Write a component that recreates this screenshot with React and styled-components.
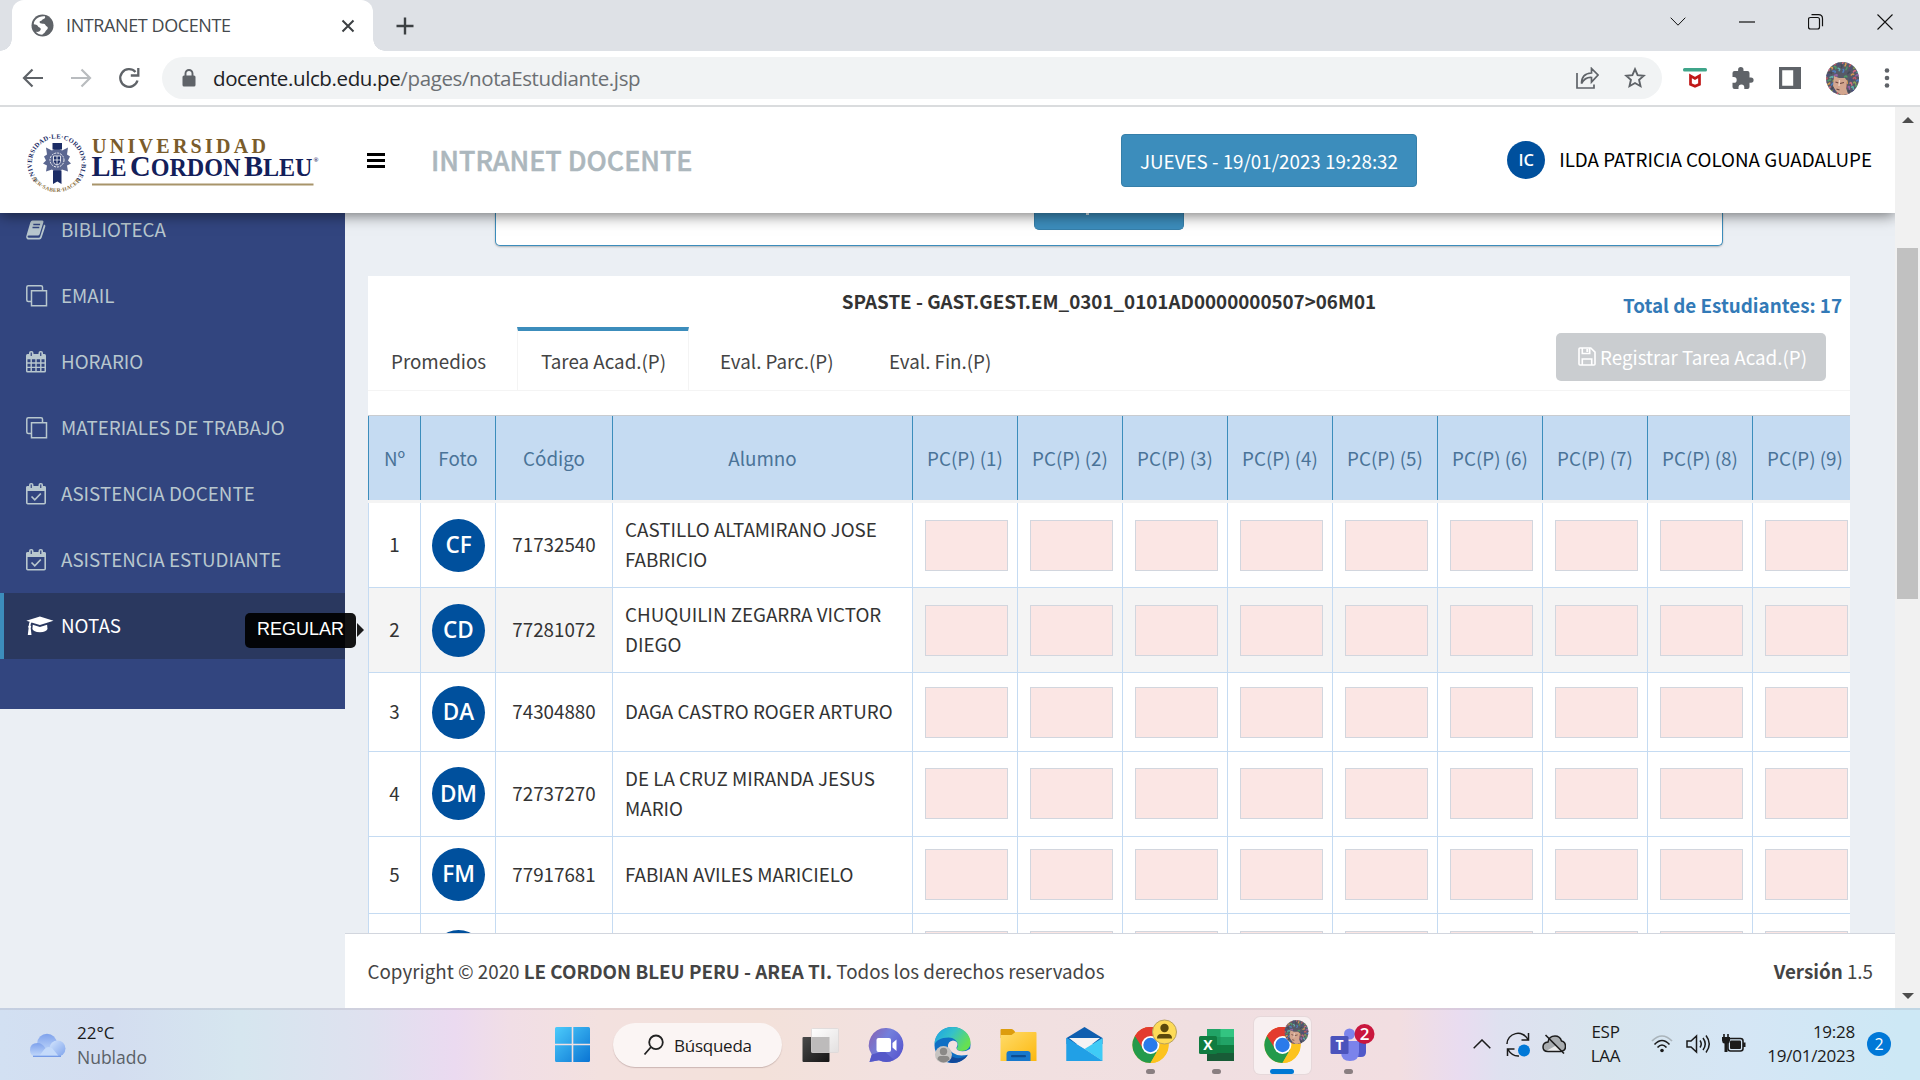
import React from "react";
import styled, { createGlobalStyle, css } from "styled-components";

const Global = createGlobalStyle`
  * { box-sizing: border-box; }
  html, body { margin: 0; padding: 0; overflow: hidden; }
  svg { display: block; flex: none; }
`;

const SITE_FONT = `"Noto Sans CJK JP", "Open Sans", sans-serif`;
const UI_FONT = `"Open Sans", "Noto Sans", sans-serif`;

/* ---------- browser window ---------- */

const Screen = styled.div`
  width: 1920px;
  height: 1080px;
  display: flex;
  flex-direction: column;
  overflow: hidden;
  background: #fff;
  font-family: ${UI_FONT};
  white-space: nowrap;
`;

const TabStrip = styled.div`
  height: 51px;
  flex: none;
  display: flex;
  align-items: center;
  background: #dee1e6;
  padding-left: 12px;
`;

const BrowserTab = styled.div`
  position: relative;
  width: 361px;
  height: 51px;
  background: #fff;
  border-radius: 12px 12px 0 0;
  display: flex;
  align-items: center;
  padding: 0 18px 0 19px;
  &::before,
  &::after {
    content: "";
    position: absolute;
    bottom: 0;
    width: 12px;
    height: 12px;
  }
  &::before {
    left: -12px;
    background: radial-gradient(circle at 0 0, transparent 11.5px, #fff 12px);
  }
  &::after {
    right: -12px;
    background: radial-gradient(circle at 100% 0, transparent 11.5px, #fff 12px);
  }
`;

const TabTitle = styled.span`
  margin-left: 12px;
  padding-bottom: 1px;
  flex: 1;
  font-size: 18px;
  letter-spacing: -0.4px;
  color: #45494d;
`;

const NewTab = styled.div`
  margin-left: 22px;
  flex: 1;
`;

const WindowControls = styled.div`
  display: flex;
  align-items: center;
  height: 43px;
  margin-bottom: 8px;
  gap: 53px;
  padding-right: 27px;
`;

const Toolbar = styled.div`
  height: 54px;
  flex: none;
  display: flex;
  align-items: center;
  padding: 0 30px 0 22px;
`;

const NavButtons = styled.div`
  display: flex;
  align-items: center;
  gap: 26px;
  width: 140px;
`;

const Omnibox = styled.div`
  width: 1500px;
  height: 42px;
  flex: none;
  border-radius: 21px;
  background: #f1f3f4;
  display: flex;
  align-items: center;
  padding: 0 16px 0 20px;
`;

const Url = styled.span`
  margin-left: 17px;
  flex: 1;
  font-size: 20.5px;
  letter-spacing: -0.38px;
  color: #6b6f73;
  b {
    font-weight: 400;
    color: #202124;
  }
`;

const OmniActions = styled.div`
  display: flex;
  gap: 25px;
`;

const Extensions = styled.div`
  display: flex;
  align-items: center;
  flex: 1;
  padding-left: 21px;
  justify-content: space-between;
`;

const ToolbarLine = styled.div`
  height: 2px;
  flex: none;
  background: #dadcde;
`;

/* ---------- site ---------- */

const Page = styled.div`
  height: 901px;
  flex: none;
  display: flex;
  font-family: ${SITE_FONT};
  font-size: 18.8px;
  line-height: 30px;
  color: #333;
`;

const Site = styled.div`
  width: 1895px;
  display: flex;
  flex-direction: column;
  background: #ebeff4;
`;

const Header = styled.header`
  position: relative;
  z-index: 2;
  height: 106px;
  flex: none;
  display: flex;
  align-items: center;
  background: #fff;
  padding: 0 23px 0 24px;
  box-shadow: 0 2px 14px rgba(0, 0, 0, 0.55);
  clip-path: inset(0 0 -30px 0);
`;

const Burger = styled.div`
  display: flex;
  flex-direction: column;
  justify-content: space-between;
  width: 18px;
  height: 15px;
  margin-left: 43px;
  i {
    height: 3px;
    background: #000;
  }
`;

const SiteTitle = styled.h1`
  margin: 0 0 0 46px;
  font-size: 26.85px;
  font-weight: 500;
  color: #acb7bd;
  width: 690px;
  -webkit-text-stroke: 0.5px #acb7bd;
`;

const DateButton = styled.button`
  width: 296px;
  height: 53px;
  padding: 2px 0 0;
  border: 1px solid #367fa9;
  border-radius: 4px;
  background: #3c8dbc;
  color: #fff;
  font: inherit;
`;

const User = styled.div`
  margin-left: auto;
  display: flex;
  align-items: center;
  gap: 14px;
  color: #000;
`;

const UserName = styled.span`
  padding-bottom: 2px;
`;

const Avatar = styled.div`
  width: ${(p) => p.$size}px;
  height: ${(p) => p.$size}px;
  flex: none;
  border-radius: 50%;
  background: #00509d;
  color: #fff;
  font-family: ${UI_FONT};
  font-weight: 600;
  font-size: ${(p) => p.$font}px;
  display: flex;
  align-items: center;
  justify-content: center;
`;

const Body = styled.div`
  flex: 1;
  min-height: 0;
  display: flex;
  overflow: hidden;
`;

const Sidebar = styled.nav`
  width: 345px;
  height: 496px;
  flex: none;
  background: #32457f;
  overflow: visible;
`;

const Menu = styled.ul`
  list-style: none;
  margin: -16px 0 0;
  padding: 0;
`;

const MenuItem = styled.li`
  height: 66px;
  display: flex;
  align-items: center;
  padding: 0 0 2px ${(p) => (p.$active ? 22 : 26)}px;
  color: #b8c7ce;
  ${(p) =>
    p.$active &&
    css`
      border-left: 4px solid #3c8dbc;
      background: #2a385f;
      color: #fff;
    `}
`;

const MenuIcon = styled.span`
  width: 35px;
  flex: none;
  padding-top: 1px;
`;

const Tooltip = styled.div`
  position: relative;
  z-index: 3;
  margin-left: auto;
  margin-right: -11px;
  top: 5px;
  width: 111px;
  height: 35px;
  flex: none;
  border-radius: 5px;
  background: rgba(0, 0, 0, 0.92);
  color: #fff;
  font: 18px/33px "Liberation Sans", Arial, sans-serif;
  padding-left: 12px;
  &::after {
    content: "";
    position: absolute;
    left: 112px;
    top: 10px;
    border: 7px solid transparent;
    border-left-color: #1a1a1a;
    border-right: 0;
  }
`;

const Main = styled.main`
  flex: 1;
  min-width: 0;
  display: flex;
  flex-direction: column;
`;

const Content = styled.div`
  flex: 1;
  min-height: 0;
  overflow: hidden;
`;

const SearchBox = styled.section`
  width: 1228px;
  height: 33px;
  margin-left: 150px;
  background: #fff;
  border: 1px solid #3c8dbc;
  border-top: 0;
  border-radius: 0 0 5px 5px;
  box-shadow: 0 1px 2px rgba(0, 0, 0, 0.25);
`;

const QueryButton = styled.div`
  position: relative;
  width: 150px;
  height: 17px;
  margin-left: 538px;
  background: #3c8dbc;
  border: 1px solid #367fa9;
  border-top: 0;
  border-radius: 0 0 5px 5px;
  &::after {
    content: "";
    position: absolute;
    left: 51px;
    top: 0;
    width: 3px;
    height: 2px;
    background: #d6e6ef;
  }
`;

const Card = styled.section`
  width: 1482px;
  margin: 30px 0 0 23px;
  background: #fff;
  overflow: hidden;
`;

const CardHead = styled.div`
  height: 51px;
  display: grid;
  grid-template-columns: 1fr auto 1fr;
  font-weight: 700;
  padding: 10px 8px 0;
`;

const Total = styled.span`
  justify-self: end;
  padding-top: 4px;
  color: #337ab7;
`;

const Tabs = styled.div`
  height: 64px;
  display: flex;
  border-bottom: 1px solid #f4f4f4;
`;

const Tab = styled.div`
  width: ${(p) => p.$w}px;
  padding: 15px 0 0 ${(p) => p.$pad}px;
  color: #444;
  border-top: 4px solid ${(p) => (p.$active ? "#3c8dbc" : "transparent")};
  border-left: 1px solid ${(p) => (p.$active ? "#f4f4f4" : "transparent")};
  border-right: 1px solid ${(p) => (p.$active ? "#f4f4f4" : "transparent")};
`;

const SaveButton = styled.button`
  margin: 6px 24px 0 auto;
  width: 270px;
  height: 48px;
  border: 0;
  border-radius: 5px;
  background: #cacdd0;
  color: #fff;
  font: inherit;
  padding: 0 0 1px 3px;
  display: flex;
  align-items: center;
  justify-content: center;
  gap: 4px;
`;

const Table = styled.div`
  margin-top: 24px;
  width: 1489px;
`;

const columns = css`
  display: grid;
  grid-template-columns: 52px 75px 117px 300px repeat(9, 105px);
`;

const HeadRow = styled.div`
  ${columns}
  height: 88px;
  border-top: 1px solid #c9ccd0;
  border-bottom: 3px solid #f4f4f4;
  background: #c5dbf2;
  color: #4a7398;
`;

const HeadCell = styled.div`
  display: flex;
  align-items: center;
  justify-content: center;
  padding-bottom: 1px;
  border-left: 1px solid #3c8dbc;
`;

const Row = styled.div`
  ${columns}
  height: ${(p) => p.$h}px;
  border-bottom: 1px solid #c5dbf2;
  background: ${(p) => (p.$shade ? "#f4f4f4" : "#fff")};
`;

const Cell = styled.div`
  display: flex;
  align-items: center;
  justify-content: center;
  padding-bottom: ${(p) => p.$lift || 0}px;
  border-left: 1px solid #c5dbf2;
`;

const PhotoCell = styled(Cell)`
  padding-left: 1px;
`;

const NameCell = styled(Cell)`
  justify-content: flex-start;
  background: #fff;
  padding-left: 12px;
  white-space: pre-line;
`;

const Score = styled.div`
  width: 83px;
  height: 51px;
  margin-left: 3px;
  border: 1px solid #d2d6de;
  background: #fbe6e4;
`;

const Footer = styled.footer`
  height: 75px;
  flex: none;
  display: flex;
  justify-content: space-between;
  align-items: center;
  padding: 0 22px 0 22.5px;
  background: #fff;
  border-top: 1px solid #d2d6de;
  color: #444;
`;

const Scrollbar = styled.div`
  width: 25px;
  background: #f1f1f1;
  display: flex;
  flex-direction: column;
  align-items: center;
  padding: 10px 0 9px;
`;

const Thumb = styled.div`
  width: 21px;
  height: 351px;
  margin: 125px 0 auto;
  background: #c1c1c1;
`;

const Arrow = styled.div`
  border: 6px solid transparent;
  ${(p) =>
    p.$up
      ? "border-bottom-color:#4d4d4d;border-top:0;"
      : "border-top-color:#4d4d4d;border-bottom:0;"}
`;

/* ---------- taskbar ---------- */

const Taskbar = styled.div`
  height: 72px;
  flex: none;
  display: flex;
  align-items: center;
  color: #1b1b1b;
  background: linear-gradient(
    90deg,
    #d2e0f2 0px, #d3ddf0 110px, #d6e6ef 240px, #dfe1ef 370px, #ebdaf0 455px,
    #f1dee6 510px, #f3e1df 600px, #f3e1da 760px, #f2e1e0 900px, #f0dfe1 1200px,
    #f2dee1 1400px, #e9dcf0 1460px, #dfe1f0 1500px, #d8e5ee 1600px,
    #d5e6f5 1740px, #cde8f5 1900px
  );
  box-shadow: inset 0 2px 0 rgba(80, 60, 80, 0.1);
`;

const Weather = styled.div`
  display: flex;
  align-items: center;
  width: 555px;
  padding: 2px 0 0 29px;
  gap: 11px;
`;

const Lines = styled.div`
  display: flex;
  flex-direction: column;
  font-size: 17px;
  line-height: 24px;
  letter-spacing: ${(p) => p.$ls ?? -0.25}px;
  text-align: ${(p) => p.$align || "left"};
  width: ${(p) => (p.$w ? p.$w + "px" : "auto")};
  small {
    font-size: 17.5px;
    color: #5a6168;
  }
`;

const SearchPill = styled.div`
  width: 169px;
  height: 44px;
  margin: 2px 5px 0 23px;
  border-radius: 22px;
  background: #fbf5f4;
  box-shadow: 0 1px 1px rgba(90, 60, 60, 0.25);
  display: flex;
  align-items: center;
  gap: 9px;
  padding-left: 30px;
  font-size: 17px;
  letter-spacing: -0.25px;
`;

const AppSlot = styled.div`
  position: relative;
  width: 66px;
  height: 72px;
  flex: none;
  display: flex;
  flex-direction: column;
  align-items: center;
  padding-top: 9px;
`;

const AppTile = styled.div`
  width: 57px;
  height: 57px;
  padding: 4px 4px 0;
  border-radius: 6px;
  ${(p) =>
    p.$on &&
    css`
      background: #f8f0f1;
      box-shadow: 0 0 0 1px #e6d8da;
    `}
`;

const RunMark = styled.i`
  width: ${(p) => (p.$on ? 24 : 9)}px;
  height: 5px;
  margin-top: -5px;
  border-radius: 3px;
  background: ${(p) => (p.$on ? "#0078d4" : "#8a7f81")};
`;

const Tray = styled.div`
  display: flex;
  align-items: center;
  flex: 1;
  padding-left: 92px;
`;

const TrayGap = styled.span`
  width: ${(p) => p.$w}px;
  flex: none;
`;

const Notice = styled.div`
  width: 24px;
  height: 24px;
  margin-left: 12px;
  border-radius: 50%;
  background: #0078d7;
  color: #fff;
  font-size: 16px;
  line-height: 24px;
  text-align: center;
`;

/* ---------- drawings ---------- */

const Logo = () => (
  <svg width="300" height="80" viewBox="24 119.500 300 80" fontFamily='"Liberation Serif", serif'>
    <defs>
      <path id="ringTop" d="M37.5 179 A25 25 0 1 1 76 179" />
      <path id="ringBottom" d="M32.500 178 A29 29 0 0 0 81.500 178" />
    </defs>
    <text fontSize="6.500" fontWeight="700" fill="#1c2d66">
      <textPath href="#ringTop" textLength="114" lengthAdjust="spacing">UNIVERSIDAD·LE·CORDON·BLEU</textPath>
    </text>
    <text fontSize="5.500" fontWeight="700" fill="#8a713f">
      <textPath href="#ringBottom" textLength="56" lengthAdjust="spacing">SER·SABER·HACER</textPath>
    </text>
    <g fill="#1c2d66">
      <path d="M52.500 142.500h9.500v6.500h-9.500zM53 170h8.500v13.500l-4.200-2.500-4.300 2.500z" />
      <path d="M46 147l6 3 5-3 5 3 6-3-1 7 3 2-2 4 3 3-4 2 1 6-6-2-5 4-5-4-6 2 1-6-4-2 3-3-2-4 3-2z" opacity="0.72" />
    </g>
    <circle cx="57" cy="159.500" r="7" fill="none" stroke="#fff" strokeWidth="0.900" strokeDasharray="2 1" />
    <path d="M53.500 155.500h7v5.500q0 2.500-3.500 3.500-3.500-1-3.500-3.500zM57 155.500v9M53.500 159.500h7" fill="#1c2d66" stroke="#fff" strokeWidth="0.800" />
    <text x="92" y="152.200" fontSize="20" fontWeight="700" fill="#7a5c2b" textLength="174" lengthAdjust="spacing">UNIVERSIDAD</text>
    <g fill="#13205a" fontWeight="700">
      <text x="91.500" y="175.300" fontSize="29" textLength="221" lengthAdjust="spacingAndGlyphs">
        L<tspan fontSize="24.500">E</tspan><tspan fontSize="14"> </tspan>C<tspan fontSize="24.500">ORDON</tspan><tspan fontSize="14"> </tspan>B<tspan fontSize="24.500">LEU</tspan>
      </text>
      <text x="313.500" y="161.500" fontSize="6.500">®</text>
    </g>
    <path d="M92 184h221.500" stroke="#a8946a" strokeWidth="2" />
  </svg>
);

const Globe = () => (
  <svg width="23" height="23" viewBox="0 0 23 23">
    <circle cx="11.500" cy="11.500" r="11" fill="#5f6368" />
    <path d="M14 2.300c.5 1.800-.3 2.600-2 3-1.300.3-1 1.600-2.400 1.800-1.400.2-1.200 1.600-.2 2.200 2 .9 4-.4 5 1.600.8 1.700 2.500 1.300 2.400 3-.1 1.500-1.700 1.800-2.400 3.600-1 2.200-2.600 2-3.100 3.300-2.600 0-5-1.100-6.500-3 2.600.4 4.700-.6 5-2.500.2-1.700-2.400-1.500-3-3.200-.5-1.400-2.300-1.700-4-1.900C2.800 6 7.500 1.600 14 2.300z" fill="#fff" />
  </svg>
);

const Stroke = ({ w, h, d, c = "#5f6368", s = 2, fill = "none", ...rest }) => (
  <svg width={w} height={h} viewBox={`0 0 ${w} ${h}`} fill={fill} stroke={c} strokeWidth={s} {...rest}>
    <path d={d} />
  </svg>
);

const Portrait = ({ size }) => {
  const dabs = ["#4f9b68", "#c75c68", "#4f7fc0", "#d39a50", "#9563a6", "#454a58", "#cf6c80", "#5fb0ac", "#4a4f7c", "#8ba356"];
  return (
    <svg width={size} height={size} viewBox="0 0 33 33">
      <defs><clipPath id={`pc${size}`}><circle cx="16.500" cy="16.500" r="16.500" /></clipPath></defs>
      <g clipPath={`url(#pc${size})`}>
        <rect width="33" height="33" fill="#575a68" />
        {Array.from({ length: 75 }, (_, i) => {
          const a = i * 2.4;
          const r = 2 + Math.sqrt(i) * 1.95;
          const x = 16.5 + r * Math.cos(a);
          const y = 15 + r * Math.sin(a);
          return (
            <path key={i} d={`M${x} ${y}q1.500 -2 ${2.4 * Math.cos(a)} ${2.8 * Math.sin(a)}`} stroke={dabs[i % 10]} strokeWidth="1.500" fill="none" strokeLinecap="round" />
          );
        })}
        <path d="M8 14l5 2 6 0 2 3-1 7 2 6-7 1-5-4-3-5z" fill="#d3a68f" />
        <path d="M9.500 20l3 1M14 21.500l4-1M10.500 27l3 1" stroke="#6b4640" strokeWidth="1.100" />
        <path d="M13.500 18l-.5 6" stroke="#edd2c3" strokeWidth="1.300" />
      </g>
    </svg>
  );
};

const Book = () => (
  <svg width="21" height="20" viewBox="0 0 21 20">
    <path d="M6.500.5h9.800q1.600 0 1.100 1.700L13.700 14q-.5 1.500-2 1.500H2.800q-1.300 0-1.300 1 .1 1.300 1.700 1.300h9.600q1 0 1.400-1.200L18 4.600q1.800.4 1.300 2l-3.700 11.200q-.5 1.700-2.200 1.700H3Q0 19.500.2 16.400L4.300 2.500Q5 .5 6.500.5z" fill="#b8c7ce" />
    <path d="M7.300 4.500h6.800M6.500 7.500h6.800" stroke="#32457f" strokeWidth="1.300" />
  </svg>
);

const Clone = () => <Stroke w={22} h={22} c="#b8c7ce" s={1.5} d="M5.500 5.700h15v15h-15zM5.500 16.500H2.300q-1.500 0-1.500-1.500V2.300Q.8.800 2.300.8H15q1.500 0 1.500 1.500v3.200" />;

const Calendar = () => (
  <svg width="20" height="22" viewBox="0 0 20 22">
    <rect x="0" y="3" width="20" height="18.500" rx="1.500" fill="#b8c7ce" />
    <rect x="3" y="0" width="4.500" height="6.500" rx="2" fill="#b8c7ce" />
    <rect x="12.500" y="0" width="4.500" height="6.500" rx="2" fill="#b8c7ce" />
    <path d="M5.250 1.500v3.500M14.750 1.500v3.500" stroke="#32457f" strokeWidth="1.200" />
    <path
      d="M1.500 8.300h3v3h-3zM5.900 8.300h3.400v3H5.900zM10.700 8.300h3.400v3h-3.400zM15.500 8.300h3v3h-3zM1.500 12.700h3v3h-3zM5.900 12.700h3.400v3H5.900zM10.700 12.700h3.400v3h-3.400zM15.500 12.700h3v3h-3zM1.500 17.100h3v3h-3zM5.900 17.100h3.400v3H5.900zM10.700 17.100h3.400v3h-3.400zM15.500 17.100h3v3h-3z"
      fill="#32457f"
    />
  </svg>
);

const CalendarCheck = () => (
  <svg width="20" height="22" viewBox="0 0 20 22" fill="none" stroke="#b8c7ce">
    <path d="M0 4.500Q0 3 1.500 3h17Q20 3 20 4.500V8H0z" fill="#b8c7ce" stroke="none" />
    <rect x=".8" y="4" width="18.400" height="16.700" rx="1" strokeWidth="1.600" />
    <rect x="3" y="0" width="4.500" height="6.500" rx="2" fill="#b8c7ce" stroke="none" />
    <rect x="12.500" y="0" width="4.500" height="6.500" rx="2" fill="#b8c7ce" stroke="none" />
    <path d="M5.250 1.500v3.500M14.750 1.500v3.500" stroke="#32457f" strokeWidth="1.200" />
    <path d="M5.500 13.500l3.300 3.300 6-6.300" strokeWidth="1.700" />
  </svg>
);

const Cap = () => (
  <svg width="28" height="20" viewBox="0 0 28 20" fill="#fff">
    <path d="M13.900.5L27.500 4.800 13.900 9 5.500 6.500Q4.600 7.500 4.500 9.500q1.300.9.200 2.400l.8 7H1.800l.8-7q-1.200-1.500.2-2.500.1-2.200.9-3.700L.3 4.800z" />
    <path d="M6.800 8.800l7.100 2.300 7.200-2.300.4 4.200q-1 3-7.600 3.200-6.500-.2-7.500-3.200z" />
  </svg>
);

const Floppy = () => (
  <svg width="18" height="19" viewBox="0 0 18 19" fill="none" stroke="#fff" strokeWidth="1.600">
    <path d="M1 2q0-1 1-1h10.800L17 5.200V17q0 1-1 1H2q-1 0-1-1z" />
    <path d="M4.300 18v-6h9.400v6" />
    <path d="M4.300 1v5.500h7.400V1" />
    <path d="M9.300 2v3" strokeWidth="2" />
  </svg>
);

const CloudArt = () => (
  <svg width="37" height="25" viewBox="0 0 37 25">
    <defs>
      <linearGradient id="cl" x1="0" y1="0" x2="0" y2="1"><stop offset="0" stopColor="#7fa2ec" /><stop offset="1" stopColor="#c5dbfb" /></linearGradient>
      <linearGradient id="cl2" x1="0" y1="0" x2="1" y2="1"><stop offset="0" stopColor="#d5e6fd" /><stop offset="1" stopColor="#7ea3ec" /></linearGradient>
    </defs>
    <circle cx="18" cy="10.500" r="9.800" fill="url(#cl)" />
    <circle cx="28.500" cy="15.500" r="8" fill="url(#cl2)" />
    <path d="M8.500 10q5 0 8 5.500l4-1 8 9.500h-20Q1 24 1 17t7.500-7z" fill="url(#cl)" />
    <path d="M14 18q4-6 9-3l7 8.500H10z" fill="#c4dafa" />
    <path d="M4 23.300h28" stroke="#6d95e6" strokeWidth="1.200" />
  </svg>
);

const StartArt = () => (
  <svg width="35" height="35" viewBox="0 0 35 35">
    <defs><linearGradient id="st" x1="0" y1="0" x2="1" y2="1" gradientUnits="objectBoundingBox"><stop offset="0" stopColor="#4ccbfb" /><stop offset="1" stopColor="#0a74d3" /></linearGradient></defs>
    <path d="M1.500 0H16.700v16.700H0V1.500Q0 0 1.500 0zM18.300 0h15.200q1.500 0 1.500 1.500v15.200H18.300zM0 18.300h16.700V35H1.500Q0 35 0 33.500zM18.300 18.300H35v15.200q0 1.500-1.500 1.500H18.300z" fill="url(#st)" />
  </svg>
);

/* App icons share one square box, centred on the icon's centre. */
const Art = ({ children }) => <svg width="49" height="49" viewBox="0 0 49 49" overflow="visible">{children}</svg>;

const TaskView = () => (
  <Art>
    <defs>
      <linearGradient id="tv" x1="0" y1="0" x2="1" y2="1"><stop offset="0" stopColor="#4a4a4a" /><stop offset="1" stopColor="#151515" /></linearGradient>
      <linearGradient id="tv2" x1="0" y1="0" x2="1" y2="1"><stop offset="0" stopColor="#fff" /><stop offset="1" stopColor="#e3e0e0" /></linearGradient>
    </defs>
    <rect x="6.500" y="16" width="27" height="25" rx="1" fill="url(#tv)" />
    <rect x="15.500" y="7.500" width="27" height="24" rx="1" fill="url(#tv2)" stroke="#dcd8d8" strokeWidth=".8" />
    <path d="M15.500 16h18v15.500h-18z" fill="#bdbbbb" />
  </Art>
);

const Chat = () => (
  <Art>
    <defs><linearGradient id="ch" x1="0" y1="0" x2="1" y2="0.6"><stop offset="0" stopColor="#8a5fae" /><stop offset=".5" stopColor="#7380dc" /><stop offset="1" stopColor="#5b5bd0" /></linearGradient></defs>
    <path d="M24.500 7a17 17 0 1 1-7.500 32.300L7.500 41l2.300-7.500A17 17 0 0 1 24.500 7z" fill="url(#ch)" />
    <path d="M9.800 33.500L7.500 41l9.500-1.700q8 3.700 15-.5L22 30z" fill="#5558c8" />
    <rect x="14.500" y="17" width="14.500" height="14" rx="2" fill="#fff" />
    <path d="M30.500 22l4-3.500v11.500l-4-3.500z" fill="#fff" />
  </Art>
);

const Edge = () => (
  <Art>
    <defs>
      <linearGradient id="eg" x1="0" y1="0" x2="1" y2=".5"><stop offset="0" stopColor="#1a9fe6" /><stop offset=".5" stopColor="#35c1c9" /><stop offset="1" stopColor="#66e052" /></linearGradient>
    </defs>
    <circle cx="24.500" cy="24" r="18" fill="#0f6fc4" />
    <path d="M6.500 24C6.500 13 14 6 24.500 6 35 6 42.500 13.500 42.500 21.500c0 5.500-4 8.500-8.500 8.500-4 0-5.500-1.500-5-3 .8-1.500 1-2.500.7-4-.7-3.500-4-6.500-9-6.500C13 16.500 7 20 6.500 24z" fill="url(#eg)" />
    <path d="M19 25c-1 8 6 13 13 12 4-.5 6.500-2 8-3.500C37 39 31 42 24.500 42 16 41 11 30 19 25z" fill="#11499a" />
    <path d="M20 26.500Q19.500 20 25 19.500q4.500.5 4.500 4-.1 1.500-1 3-.5 3.500 6 3.700 4.500 0 8.500-2.700v5q-3 2-7 1.800Q25 35.500 20 26.500z" fill="#f2e1e0" />
    <circle cx="15.500" cy="33.500" r="8.500" fill="#c6c3c1" />
    <circle cx="15.500" cy="30.500" r="3.700" fill="#8b8987" />
    <path d="M9.500 38.500q0-3.500 3-3.500h6q3 0 3 3.500-6 6-12 0z" fill="#8b8987" />
  </Art>
);

const Folder = () => (
  <Art>
    <defs><linearGradient id="fo" x1="0" y1="0" x2="1" y2="1"><stop offset="0" stopColor="#ffdc6b" /><stop offset="1" stopColor="#fcb80e" /></linearGradient></defs>
    <path d="M6.500 9q0-1 1-1h10q1.500 0 2.500 1.500L22 12v5H6.500z" fill="#dd9d0d" />
    <path d="M6.500 14h11l4-3H41.500q1 0 1 1v28H6.500z" fill="url(#fo)" />
    <path d="M12.500 40v-7q0-3 3-3h18q3 0 3 3v7z" fill="#1778cc" />
    <rect x="17" y="34" width="15" height="2.200" rx="1" fill="#0b4d92" />
  </Art>
);

const Mail = () => (
  <Art>
    <path d="M6.500 17L24.500 6l18 11v6h-36z" fill="#0f5eaf" />
    <path d="M9 17h31L24.500 29z" fill="#f4f3f4" />
    <path d="M6.500 17v23h36z" fill="#28a6e8" />
    <path d="M42.500 17v23L24.500 28z" fill="#3fcbf6" />
    <path d="M6.500 17l18 11 18 12h-36z" fill="#21a0e6" />
  </Art>
);

const Chrome = ({ children }) => (
  <Art>
    <g transform="translate(24.500 24)">
      <circle r="18" fill="#fcc31e" />
      <path d="M0 0L-15.600-9A18 18 0 0 1 15.600-9H0z" fill="#e33b2e" />
      <path d="M-15.600-9A18 18 0 0 0 0 18L7.800 4.500 0 0z" fill="#239a4b" />
      <path d="M-15.600-9L-7 4.500 0-9H15.600A18 18 0 0 0-15.600-9z" fill="#e33b2e" />
      <path d="M7.800 4.500L0 18A18 18 0 0 0 15.600-9H0z" fill="#fcc31e" />
      <circle r="8.900" fill="#fff" />
      <circle r="7.200" fill="#2a7bea" />
    </g>
    {children}
  </Art>
);

const YellowUser = () => (
  <g>
    <circle cx="38.500" cy="11" r="12" fill="#fddb58" stroke="#b9a25e" strokeWidth="1" />
    <circle cx="38.500" cy="7" r="4.200" fill="#5b4a0c" />
    <path d="M31 17.500q0-4.500 4-4.500h7q4 0 4 4.500z" fill="#5b4a0c" />
  </g>
);

const Excel = () => (
  <Art>
    <path d="M15 8h27v32H15z" fill="#21a366" />
    <path d="M28.500 8H42v8H28.500z" fill="#33c481" />
    <path d="M15 24h13.500v8H15zM28.500 24H42v8H28.500z" fill="#107c41" />
    <path d="M15 24h13.500v-8H15z" fill="#1a9157" opacity=".6" />
    <path d="M15 32h27v8H15z" fill="#185c37" />
    <rect x="7" y="15" width="18" height="18" rx="1.500" fill="#107c41" />
    <text x="16" y="29" fontSize="14" fontWeight="700" fill="#fff" textAnchor="middle">X</text>
  </Art>
);

const Teams = () => (
  <Art>
    <circle cx="25.500" cy="13" r="5.500" fill="#7b83eb" />
    <circle cx="37" cy="15" r="4" fill="#5059c9" />
    <path d="M30 20h12v11q0 5-5 5h-5z" fill="#5059c9" />
    <path d="M17 20h18v11q0 9-9 9t-9-9z" fill="#7b83eb" />
    <rect x="6.500" y="15" width="18" height="18" rx="1.500" fill="#4b53bc" />
    <text x="15.500" y="29" fontSize="14" fontWeight="700" fill="#fff" textAnchor="middle">T</text>
    <circle cx="40.500" cy="13" r="10" fill="#c9173e" />
    <text x="40.500" y="19" fontSize="17" fontWeight="600" fill="#fff" textAnchor="middle">2</text>
  </Art>
);

/* ---------- data ---------- */

const menu = [
  ["BIBLIOTECA", Book],
  ["EMAIL", Clone],
  ["HORARIO", Calendar],
  ["MATERIALES DE TRABAJO", Clone],
  ["ASISTENCIA DOCENTE", CalendarCheck],
  ["ASISTENCIA ESTUDIANTE", CalendarCheck],
  ["NOTAS", Cap],
];

const students = [
  { n: 1, ini: "CF", code: "71732540", name: "CASTILLO ALTAMIRANO JOSE\nFABRICIO", h: 85 },
  { n: 2, ini: "CD", code: "77281072", name: "CHUQUILIN ZEGARRA VICTOR\nDIEGO", h: 85, shade: true },
  { n: 3, ini: "DA", code: "74304880", name: "DAGA CASTRO ROGER ARTURO", h: 79 },
  { n: 4, ini: "DM", code: "72737270", name: "DE LA CRUZ MIRANDA JESUS\nMARIO", h: 85, lift: 1 },
  { n: 5, ini: "FM", code: "77917681", name: "FABIAN AVILES MARICIELO", h: 77, lift: 2 },
  { n: "", ini: "", code: "", name: "", h: 85 },
];

const scores = [1, 2, 3, 4, 5, 6, 7, 8, 9];

const apps = [
  { art: <TaskView /> },
  { art: <Chat /> },
  { art: <Edge /> },
  { art: <Folder /> },
  { art: <Mail /> },
  { art: <Chrome><YellowUser /></Chrome>, run: true },
  { art: <Excel />, run: true },
  { art: <Chrome><g transform="translate(26.500 -1)"><Portrait size={24} /></g></Chrome>, run: true, on: true },
  { art: <Teams />, run: true },
];

export default function App() {
  return (
    <Screen>
      <Global />
      <TabStrip>
        <BrowserTab>
          <Globe />
          <TabTitle>INTRANET DOCENTE</TabTitle>
          <Stroke w={14} h={14} d="M1.500 1.500l11 11M12.500 1.500l-11 11" c="#3c4043" />
        </BrowserTab>
        <NewTab><Stroke w={20} h={20} d="M10 1.500v17M1.500 10h17" c="#3c4043" s={2.4} /></NewTab>
        <WindowControls>
          <Stroke w={16} h={10} d="M.7 .7l7.300 7.500 7.300-7.500" c="#111" s={1} />
          <Stroke w={16} h={2} d="M0 1h16" c="#111" s={1.2} />
          <Stroke w={16} h={16} d="M2.500 3.500h7q2 0 2 2v7.500q0 2-2 2h-7q-2 0-2-2V5.500q0-2 2-2zM3.500.7h7q4 0 4 4v7.500" c="#111" s={1.2} />
          <Stroke w={16} h={16} d="M.5.5l15 15M15.500.5l-15 15" c="#111" s={1.1} />
        </WindowControls>
      </TabStrip>
      <Toolbar>
        <NavButtons>
          <Stroke w={22} h={20} d="M21 10H2.500M10.500 1.500L2 10l8.500 8.500" s={2.2} />
          <Stroke w={22} h={20} d="M1 10h18.500M11.500 1.500L20 10l-8.500 8.500" s={2.2} c="#b9bcbf" />
          <Stroke w={22} h={22} d="M17.500 5a8.800 8.800 0 1 0 2 8.500M20.300 1v7.500h-7.500" s={2.3} />
        </NavButtons>
        <Omnibox>
          <svg width="14" height="18" viewBox="0 0 14 18">
            <rect x=".5" y="6.500" width="13" height="11" rx="1.500" fill="#5f6368" />
            <path d="M3.500 7V4.500a3.500 3.500 0 0 1 7 0V7" fill="none" stroke="#5f6368" strokeWidth="1.900" />
          </svg>
          <Url><b>docente.ulcb.edu.pe</b>/pages/notaEstudiante.jsp</Url>
          <OmniActions>
            <Stroke w={23} h={22} s={1.7} d="M1 6v15h17v-3.500M5.500 16.500Q5.500 6.500 15.500 6V1.500L22 8l-6.500 7v-4.500Q9 10 5.500 16.500z" />
            <Stroke w={22} h={22} s={1.9} d="M11 2.200l2.600 5.900 6.300.6-4.800 4.200 1.400 6.300L11 16l-5.500 3.200 1.400-6.300L2.100 8.700l6.300-.6z" />
          </OmniActions>
        </Omnibox>
        <Extensions>
          <svg width="24" height="20" viewBox="0 0 24 20">
            <rect width="24" height="3.500" rx="1.500" fill="#3fa58a" />
            <path d="M7.500 7.800l4.500 2.700 4.500-2.700v8.500L12 18.200l-4.500-1.900z" fill="none" stroke="#c01818" strokeWidth="2.700" />
          </svg>
          <svg width="22" height="22" viewBox="0 0 22 22">
            <path d="M19 10.500h-1.500V6q0-2-2-2H11.500V2.700a2.700 2.700 0 0 0-5.400 0V4H2.500Q.5 4 .5 6v4h1.300a2.900 2.900 0 0 1 0 5.800H.5V20q0 2 2 2h4v-1.500a2.900 2.900 0 0 1 5.800 0V22h3.200q2 0 2-2v-4.300H19a2.600 2.600 0 0 0 0-5.200z" fill="#5f6368" />
          </svg>
          <svg width="22" height="22" viewBox="0 0 22 22">
            <path d="M0 0h22v22H0zM3.200 3.200v15.600h11V3.200z" fill="#5f6368" fillRule="evenodd" />
          </svg>
          <Portrait size={33} />
          <svg width="6" height="20" viewBox="0 0 6 20" fill="#5f6368">
            <circle cx="3" cy="2.500" r="2.300" /><circle cx="3" cy="10" r="2.300" /><circle cx="3" cy="17.500" r="2.300" />
          </svg>
        </Extensions>
      </Toolbar>
      <ToolbarLine />
      <Page>
        <Site>
          <Header>
            <Logo />
            <Burger><i /><i /><i /></Burger>
            <SiteTitle>INTRANET DOCENTE</SiteTitle>
            <DateButton>JUEVES - 19/01/2023 19:28:32</DateButton>
            <User>
              <Avatar $size={38} $font={16.5}>IC</Avatar>
              <UserName>ILDA PATRICIA COLONA GUADALUPE</UserName>
            </User>
          </Header>
          <Body>
            <Sidebar>
              <Menu>
                {menu.map(([label, Icon]) => (
                  <MenuItem key={label} $active={label === "NOTAS"}>
                    <MenuIcon><Icon /></MenuIcon>
                    {label}
                    {label === "NOTAS" && <Tooltip>REGULAR</Tooltip>}
                  </MenuItem>
                ))}
              </Menu>
            </Sidebar>
            <Main>
              <Content>
                <SearchBox><QueryButton /></SearchBox>
                <Card>
                  <CardHead>
                    <span />
                    <span>SPASTE - GAST.GEST.EM_0301_0101AD0000000507&gt;06M01</span>
                    <Total>Total de Estudiantes: 17</Total>
                  </CardHead>
                  <Tabs>
                    <Tab $w={149} $pad={22}>Promedios</Tab>
                    <Tab $w={172} $pad={23} $active>Tarea Acad.(P)</Tab>
                    <Tab $w={169} $pad={30}>Eval. Parc.(P)</Tab>
                    <Tab $w={150} $pad={30}>Eval. Fin.(P)</Tab>
                    <SaveButton><Floppy />Registrar Tarea Acad.(P)</SaveButton>
                  </Tabs>
                  <Table>
                    <HeadRow>
                      {["Nº", "Foto", "Código", "Alumno", ...scores.map((n) => `PC(P) (${n})`)].map((t) => (
                        <HeadCell key={t}>{t}</HeadCell>
                      ))}
                    </HeadRow>
                    {students.map((s, i) => (
                      <Row key={i} $h={s.h} $shade={s.shade}>
                        <Cell $lift={2}>{s.n}</Cell>
                        <PhotoCell $lift={s.lift}><Avatar $size={53} $font={22.5}>{s.ini}</Avatar></PhotoCell>
                        <Cell $lift={2}>{s.code}</Cell>
                        <NameCell $lift={2}>{s.name}</NameCell>
                        {scores.map((n) => <Cell key={n} $lift={s.lift}><Score /></Cell>)}
                      </Row>
                    ))}
                  </Table>
                </Card>
              </Content>
              <Footer>
                <span>Copyright © 2020 <b>LE CORDON BLEU PERU - AREA TI.</b> Todos los derechos reservados</span>
                <span><b>Versión</b> 1.5</span>
              </Footer>
            </Main>
          </Body>
        </Site>
        <Scrollbar><Arrow $up /><Thumb /><Arrow /></Scrollbar>
      </Page>
      <Taskbar>
        <Weather>
          <CloudArt />
          <Lines $ls={0}><span>22°C</span><small>Nublado</small></Lines>
        </Weather>
        <StartArt />
        <SearchPill>
          <Stroke w={22} h={22} c="#222" s={1.8} d="M13 1.500a6.800 6.800 0 1 1 0 13.600 6.800 6.800 0 0 1 0-13.600zM8 13l-6.500 7.500" />
          Búsqueda
        </SearchPill>
        {apps.map((a, i) => (
          <AppSlot key={i}>
            <AppTile $on={a.on}>{a.art}</AppTile>
            {a.run && <RunMark $on={a.on} />}
          </AppSlot>
        ))}
        <Tray>
          <Stroke w={18} h={10} c="#1b1b1b" s={1.5} d="M.7 9.300L9 1l8.300 8.300" />
          <TrayGap $w={15} />
          <svg width="24" height="25" viewBox="0 0 24 25" fill="none" stroke="#1b1b1b" strokeWidth="1.500">
            <path d="M1 12A11 10.500 0 0 1 22 7.500M22.500 1v7h-7M13 24Q6 24.500 2 17.500M1.500 24v-7h7" />
            <circle cx="18" cy="18.500" r="6" fill="#0078d7" stroke="none" />
          </svg>
          <TrayGap $w={12} />
          <svg width="24" height="20" viewBox="0 0 24 20">
            <path d="M6 17.500Q1 17.500 1 13t5-5q1-6 7-6 5 0 6.500 5 4 1 4 5.500t-5 5z" fill="#a9adb0" stroke="#1b1b1b" strokeWidth="1.500" />
            <path d="M5 16.500l9-5 6 5z" fill="#e9eaea" />
            <path d="M3.500 1l18.500 18.500" stroke="#1b1b1b" strokeWidth="1.600" />
          </svg>
          <TrayGap $w={22} />
          <Lines $w={35} $align="center"><span>ESP</span><span>LAA</span></Lines>
          <TrayGap $w={28} />
          <svg width="22" height="18" viewBox="0 0 22 18" fill="none" stroke="#1b1b1b" strokeWidth="1.700">
            <path d="M1 6Q11-4 21 6" stroke="#aab4bb" />
            <path d="M3.500 9.500Q11 1.500 18.500 9.500M6.500 12.500Q11 7.500 15.500 12.500" />
            <circle cx="11" cy="15.500" r="1.800" fill="#1b1b1b" stroke="none" />
          </svg>
          <TrayGap $w={13} />
          <Stroke w={25} h={20} c="#1b1b1b" s={1.5} d="M1 7h4l5.500-5v16L5 13H1zM14 6.500q2.500 3.500 0 7M17 4q4.500 6 0 12M20 1.500q6.500 8.500 0 17" />
          <TrayGap $w={11} />
          <svg width="24" height="20" viewBox="0 0 24 20">
            <rect x="6" y="4.500" width="15" height="12.500" rx="2.500" fill="none" stroke="#1b1b1b" strokeWidth="1.600" />
            <rect x="8" y="6.500" width="11" height="8.500" rx="1" fill="#1b1b1b" />
            <path d="M21 8.500h2.500v4.500H21z" fill="#1b1b1b" />
            <path d="M0 3h8v3.500Q8 9 5.500 9.500V18h-3V9.500Q0 9 0 6.500z" fill="#1b1b1b" />
            <path d="M2 0v4M6 0v4" stroke="#1b1b1b" strokeWidth="1.600" />
          </svg>
          <Lines $w={109} $align="right"><span>19:28</span><span>19/01/2023</span></Lines>
          <Notice>2</Notice>
        </Tray>
      </Taskbar>
    </Screen>
  );
}
